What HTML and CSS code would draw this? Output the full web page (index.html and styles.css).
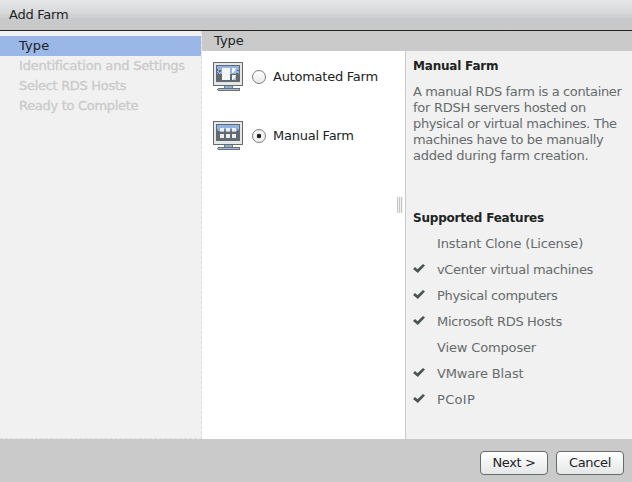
FILE: index.html
```html
<!DOCTYPE html>
<html lang="en">
<head>
<meta charset="utf-8">
<title>Add Farm</title>
<link rel="stylesheet" href="styles.css">
</head>
<body>
<div class="dialog">
  <header class="titlebar">Add Farm</header>
  <div class="body">
    <nav class="steps">
      <div class="step active">Type</div>
      <div class="step">Identification and Settings</div>
      <div class="step tight">Select RDS Hosts</div>
      <div class="step tight">Ready to Complete</div>
    </nav>
    <main class="main">
      <h2 class="bar">Type</h2>
      <div class="content">
        <section class="options">
          <label class="option">
            <svg class="monitor" width="30" height="30" viewBox="0 0 30 30" shape-rendering="crispEdges">
              <path d="M0 0h30v24H0z" fill="#666b6c"/><path d="M1 1h28v22H1z" fill="#e4e6e7"/>
              <path d="M3 3h24v17H3z" fill="#626a70"/><path d="M4 4h22v8H4z" fill="#92b2e2"/>
              <path d="M4 7h1v2H4zM6 8h2v2H6zM5 11h1v1H5zM24 8h2v1h-2zM23 11h2v1h-2zM4 10h1v1H4z" fill="#56677f"/>
              <path d="M9 6h8v12H9zM19 6h4v5h-4zM19 13h4v5h-4z" fill="#f3f4f4"/>
              <path d="M22 7h1v4h-3v-1h1V9h1zM22 14h1v4h-3v-1h1v-1h1z" fill="#b5c3d8"/>
              <path d="M11 24h9v3h-9z" fill="#92add5"/><path d="M11 24h1v3h-1zM19 24h1v3h-1z" fill="#777d82"/>
              <path d="M5 26h22v1H5zM4 27h1v1H4zM26 27h1v1h-1zM5 28h22v1H5z" fill="#6a7073"/><path d="M5 27h21v1H5z" fill="#a4b9d9"/>
            </svg>
            <span class="radio"></span><span class="label">Automated Farm</span>
          </label>
          <label class="option">
            <svg class="monitor" width="30" height="30" viewBox="0 0 30 30" shape-rendering="crispEdges">
              <path d="M0 0h30v24H0z" fill="#666b6c"/><path d="M1 1h28v22H1z" fill="#e4e6e7"/>
              <path d="M3 3h24v17H3z" fill="#626a70"/><path d="M4 4h22v6H4z" fill="#92b2e2"/>
              <path d="M4 8h1v2H4zM11 8h2v2h-2zM17 8h2v2h-2zM24 8h2v2h-2z" fill="#6e86aa"/>
              <path d="M7 7h4v4H7zM13 7h4v4h-4zM19 7h4v4h-4zM7 13h4v4H7zM13 13h4v4h-4zM19 13h4v4h-4z" fill="#eceeef"/>
              <path d="M7 10h4v1H7zM13 10h4v1h-4zM19 10h4v1h-4z" fill="#b8bec5"/>
              <path d="M11 24h9v3h-9z" fill="#92add5"/><path d="M11 24h1v3h-1zM19 24h1v3h-1z" fill="#777d82"/>
              <path d="M5 26h22v1H5zM4 27h1v1H4zM26 27h1v1h-1zM5 28h22v1H5z" fill="#6a7073"/><path d="M5 27h21v1H5z" fill="#a4b9d9"/>
            </svg>
            <span class="radio checked"></span><span class="label">Manual Farm</span>
          </label>
        </section>
        <div class="grip"></div>
        <aside class="info">
          <h3>Manual Farm</h3>
          <p class="desc">A manual RDS farm is a container<br><span class="loose">for RDSH servers hosted on</span><br>physical or virtual machines. The<br>machines have to be manually<br><span class="loose">added during farm creation.</span></p>
          <h3 class="h-feat">Supported Features</h3>
          <ul class="features">
            <li class="wide">Instant Clone (License)</li>
            <li class="yes"><svg class="check" viewBox="0 0 12 9"><path d="M0 5l2-2 2.5 2.3L10 0l2 1.5L4.8 9z"/></svg>vCenter virtual machines</li>
            <li class="yes"><svg class="check" viewBox="0 0 12 9"><path d="M0 5l2-2 2.5 2.3L10 0l2 1.5L4.8 9z"/></svg>Physical computers</li>
            <li class="yes"><svg class="check" viewBox="0 0 12 9"><path d="M0 5l2-2 2.5 2.3L10 0l2 1.5L4.8 9z"/></svg>Microsoft RDS Hosts</li>
            <li class="wide">View Composer</li>
            <li class="yes wide"><svg class="check" viewBox="0 0 12 9"><path d="M0 5l2-2 2.5 2.3L10 0l2 1.5L4.8 9z"/></svg>VMware Blast</li>
            <li class="yes wider"><svg class="check" viewBox="0 0 12 9"><path d="M0 5l2-2 2.5 2.3L10 0l2 1.5L4.8 9z"/></svg>PCoIP</li>
          </ul>
        </aside>
      </div>
    </main>
  </div>
  <footer class="footer">
    <button class="btn">Next &gt;</button>
    <button class="btn">Cancel</button>
  </footer>
</div>
</body>
</html>
```
FILE: styles.css
```css
* { box-sizing: border-box; }
body { margin: 0; }
h2, h3, p, ul { margin: 0; padding: 0; font-size: inherit; }
.dialog {
  width: 632px; height: 482px; display: flex; flex-direction: column; overflow: hidden;
  font: 13px/16px Verdana, "DejaVu Sans", sans-serif; letter-spacing: -.25px;
  color: #202323; background: #cacaca;
}
.titlebar {
  height: 31px; padding: 7px 9px; border-bottom: 1px solid #202323;
  background: linear-gradient(#e5e6e7, #d8d9da 40%, #c8c9ca 65%, #c8c8c8);
}
.body { height: 408px; display: flex; }
.steps { flex: none; width: 202px; padding-top: 5px; background: #f1f1f1; border-right: 1px dashed #dcdcdc; border-bottom: 1px dashed #dcdcdc; }
.step { height: 20px; padding-left: 19px; line-height: 19px; color: #cacaca; letter-spacing: -.2px; -webkit-text-stroke: .3px; }
.tight { letter-spacing: -.3px; }
.active { background: #9ab7e7; color: #202323; letter-spacing: .1px; -webkit-text-stroke: 0; }
.main { flex: 1; display: flex; flex-direction: column; background: #fff; }
.bar { height: 20px; padding-left: 12px; line-height: 20px; font-weight: normal; letter-spacing: 0; background: #cacaca; }
.content { flex: 1; display: flex; }
.options { width: 195px; padding: 11px 0 0 11px; }
.option { height: 59px; display: flex; align-items: flex-start; }
.monitor { flex: none; }
.radio { width: 14px; height: 14px; margin: 8px 7px 0 9px; border: 1px solid #777c7d; border-radius: 50%; background: linear-gradient(#fff, #e7e8e8); }
.checked { background: radial-gradient(circle, #202323 0 2px, #f3f3f3 2.6px); }
.label { margin-top: 7px; white-space: nowrap; }
.grip { width: 6px; height: 16px; margin: 146px 2px 0 0; background: repeating-linear-gradient(90deg, #c6c6c6 0 1px, #f1f1f1 1px 2px); }
.info { flex: 1; padding: 7px 0 0 7px; border-left: 1px solid #cacaca; background: #f1f1f1; white-space: nowrap; }
.info h3 { font: bold 12px/16px Verdana, "DejaVu Sans", sans-serif; letter-spacing: -.2px; }
.desc { margin-top: 10px; color: #666b6c; letter-spacing: -.36px; }
.loose { letter-spacing: -.27px; }
.info .h-feat { margin-top: 46px; }
.features { margin-top: 5px; list-style: none; color: #666b6c; letter-spacing: -.33px; }
.features li { height: 26px; display: flex; align-items: center; padding-left: 24px; }
.features .yes { padding-left: 0; }
.features .wide { letter-spacing: -.15px; }
.features .wider { letter-spacing: .3px; }
.check { width: 12px; height: 9px; margin: -3px 12px 0 0; fill: #4b5354; }
.footer { height: 43px; display: flex; justify-content: flex-end; gap: 8px; padding: 12px 8px 0 0; background: #cacaca; }
.btn {
  width: 68px; height: 24px; padding: 0; border: 1px solid #666b6c; border-radius: 4px;
  font: inherit; letter-spacing: -.35px; color: #202323; background: linear-gradient(#fff, #e5e6e7);
}
```
